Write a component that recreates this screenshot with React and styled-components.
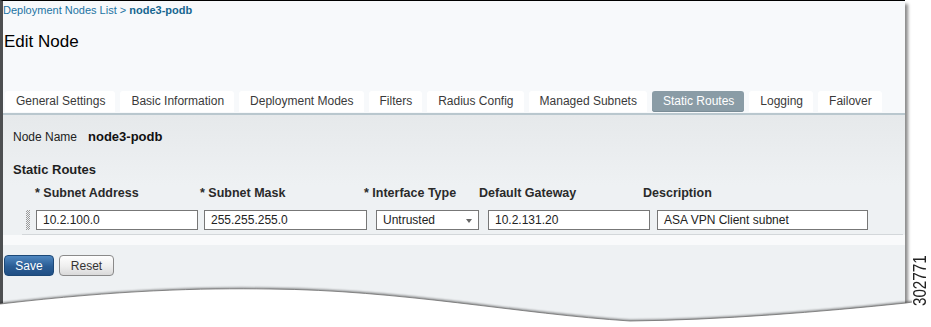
import React from 'react'
import styled, { createGlobalStyle } from 'styled-components'

const GlobalStyle = createGlobalStyle`
  html, body {
    margin: 0;
    padding: 0;
    background: #ffffff;
  }
  body {
    font-family: 'Liberation Sans', Arial, sans-serif;
  }
`

const Wrapper = styled.div`
  display: flex;
  align-items: flex-end;
  width: 931px;
  height: 327px;
  overflow: hidden;
  background: #ffffff;
`

const Stage = styled.div`
  position: relative;
  width: 912px;
  height: 327px;
  flex-shrink: 0;
`

const Frame = styled.div`
  box-sizing: border-box;
  width: 905px;
  height: 327px;
  border-top: 1px solid #000;
  border-left: 3px solid #4d4f51;
  background: #f7f9fb;
  box-shadow: 3px 4px 3px rgba(0, 0, 0, 0.45);
  display: flex;
  flex-direction: column;
`

const Header = styled.div`
  padding-top: 2px;
`

const Breadcrumb = styled.div`
  font-size: 11px;
  line-height: 14px;
  color: #1d74a3;

  b {
    color: #16668f;
  }
`

const Title = styled.h1`
  margin: 15px 0 0 1px;
  font-size: 17px;
  line-height: 20px;
  font-weight: normal;
  color: #000;
`

const TabBar = styled.div`
  display: flex;
  gap: 5px;
  margin-top: 39px;
  padding: 0 0 1px 2px;
  border-bottom: 2px solid #b9c7ce;
`

const Tab = styled.div`
  height: 21px;
  line-height: 21px;
  padding: 0 10px 0 11px;
  border-radius: 3px 3px 0 0;
  font-size: 12px;
  color: ${p => (p.$active ? '#ffffff' : '#3a3a3a')};
  background: ${p => (p.$active ? '#8a9ca6' : '#ffffff')};
  ${p => p.$active && 'border-radius: 3px; box-shadow: inset 0 -1px 0 #7b8d97;'}
`

const Panel = styled.div`
  padding: 14px 2px 0 10px;
  background: linear-gradient(#e6e9eb, #eef1f3 70px);
`

const NameRow = styled.div`
  display: flex;
  gap: 11px;
  font-size: 12px;
  line-height: 16px;
  color: #222;

  b {
    font-size: 13px;
    color: #111;
  }
`

const SectionTitle = styled.div`
  margin-top: 17px;
  font-size: 13px;
  font-weight: bold;
  line-height: 16px;
  color: #1f1f1f;
`

const HeadRow = styled.div`
  display: flex;
  margin: 7px 0 0 22px;
`

const HeadCell = styled.div`
  width: ${p => (p.$w ? `${p.$w}px` : 'auto')};
  font-size: 12.5px;
  font-weight: bold;
  line-height: 16px;
  color: #2a2a2a;
`

const RouteRow = styled.div`
  display: flex;
  align-items: center;
  margin: 9px 0 0 9px;
  padding-bottom: 4px;
  border-bottom: 1px solid #d3d7da;
`

const Handle = styled.div`
  width: 4px;
  height: 20px;
  margin: 0 6px 0 4px;
  background: repeating-conic-gradient(#9a9a9a 0 25%, transparent 0 50%) 0 0 / 2px 2px;
`

const Field = styled.div`
  box-sizing: border-box;
  width: ${p => p.$w}px;
  height: 20px;
  margin-left: ${p => p.$ml || 0}px;
  padding-left: 6px;
  border: 1px solid #777;
  background: #fff;
  font-size: 12px;
  line-height: 18px;
  color: #222;
`

const Select = styled(Field)`
  position: relative;

  &::after {
    content: '';
    position: absolute;
    right: 6px;
    top: 8px;
    border-left: 3.5px solid transparent;
    border-right: 3.5px solid transparent;
    border-top: 4px solid #666;
  }
`

const ButtonBar = styled.div`
  flex: 1;
  display: flex;
  gap: 5px;
  padding: 10px 0 0 1px;
  border-top: 10px solid #f9fafb;
  background: #eef1f3;
`

const Button = styled.button`
  box-sizing: border-box;
  height: 21px;
  width: ${p => p.$w}px;
  padding: 0;
  border-radius: 4px;
  font-family: 'Liberation Sans', Arial, sans-serif;
  font-size: 12px;
  border: 1px solid ${p => (p.$primary ? '#1c4877' : '#8a8a8a')};
  color: ${p => (p.$primary ? '#ffffff' : '#333333')};
  background: ${p =>
    p.$primary
      ? 'linear-gradient(#4f87c0, #2a5d95 55%, #204f84)'
      : 'linear-gradient(#fefefe, #eeeeee 55%, #d9d9d9)'};
`

const TornEdge = styled.svg`
  position: absolute;
  left: 0;
  bottom: 0;
  width: 912px;
  height: 47px;
`

const FigureNumber = styled.div`
  writing-mode: vertical-rl;
  transform: rotate(180deg) scaleY(0.8);
  margin-bottom: 15px;
  font-size: 19px;
  line-height: 16px;
  color: #222;
`

const tabs = [
  'General Settings',
  'Basic Information',
  'Deployment Modes',
  'Filters',
  'Radius Config',
  'Managed Subnets',
  'Static Routes',
  'Logging',
  'Failover',
]

const edge = 'M0,24 C120,10 200,8 270,9 C400,10 520,34 630,41 C720,40 820,32 906,23 L912,22'

const App = () => {
  return (
    <>
      <GlobalStyle />
      <Wrapper>
        <Stage>
          <Frame>
            <Header>
              <Breadcrumb>
                Deployment Nodes List &gt; <b>node3-podb</b>
              </Breadcrumb>
              <Title>Edit Node</Title>
            </Header>
            <TabBar>
              {tabs.map(t => (
                <Tab key={t} $active={t === 'Static Routes'}>
                  {t}
                </Tab>
              ))}
            </TabBar>
            <Panel>
              <NameRow>
                <span>Node Name</span>
                <b>node3-podb</b>
              </NameRow>
              <SectionTitle>Static Routes</SectionTitle>
              <HeadRow>
                <HeadCell $w={165}>* Subnet Address</HeadCell>
                <HeadCell $w={164}>* Subnet Mask</HeadCell>
                <HeadCell $w={115}>* Interface Type</HeadCell>
                <HeadCell $w={164}>Default Gateway</HeadCell>
                <HeadCell>Description</HeadCell>
              </HeadRow>
              <RouteRow>
                <Handle />
                <Field $w={162}>10.2.100.0</Field>
                <Field $w={163} $ml={6}>255.255.255.0</Field>
                <Select $w={103} $ml={9}>Untrusted</Select>
                <Field $w={162} $ml={9}>10.2.131.20</Field>
                <Field $w={211} $ml={7}>ASA VPN Client subnet</Field>
              </RouteRow>
            </Panel>
            <ButtonBar>
              <Button $primary $w={50}>Save</Button>
              <Button $w={55}>Reset</Button>
            </ButtonBar>
          </Frame>
          <TornEdge viewBox='0 0 912 47'>
            <defs>
              <filter id='blur' x='-5%' y='-50%' width='110%' height='200%'>
                <feGaussianBlur stdDeviation='1.2' />
              </filter>
            </defs>
            <path d={edge} fill='none' stroke='rgba(0,0,0,0.45)' strokeWidth='2.5' filter='url(#blur)' />
            <path d={`${edge} L912,47 L0,47 Z`} fill='#ffffff' />
            <path d={edge} fill='none' stroke='#6f6f6f' strokeWidth='0.8' />
          </TornEdge>
        </Stage>
        <FigureNumber>302771</FigureNumber>
      </Wrapper>
    </>
  )
}

export default App
